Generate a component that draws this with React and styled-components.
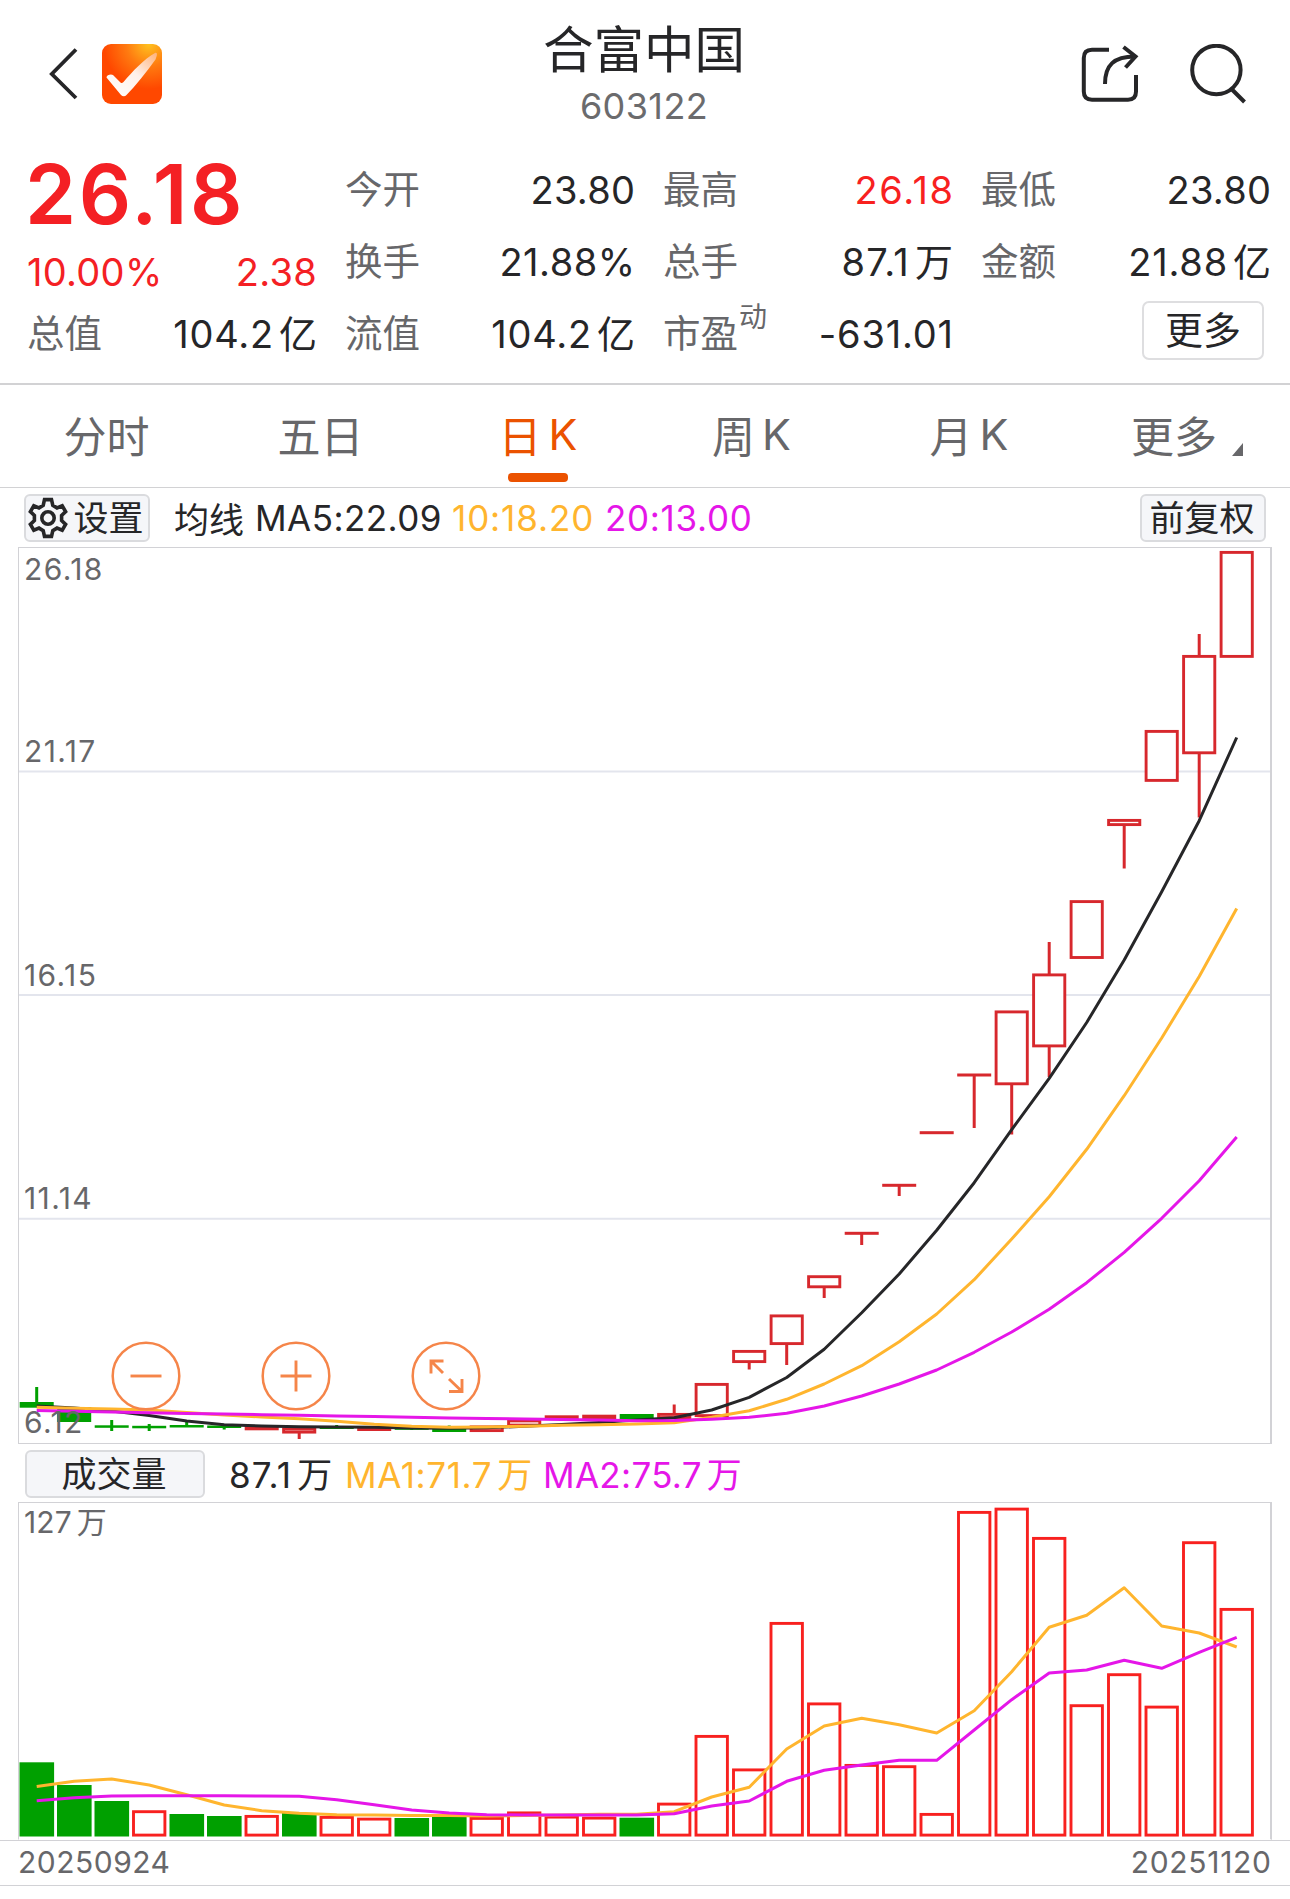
import styled, { createGlobalStyle } from "styled-components";

const GlobalStyle = createGlobalStyle`
  * {
    box-sizing: border-box;
  }
  body {
    margin: 0;
    background: #fff;
    color: #262628;
    font-family: "Inter", "Noto Sans CJK SC", sans-serif;
  }
`;

const Page = styled.div`
  width: 1290px;
  height: 1899px;
  overflow: hidden;
  background: #fff;
`;

const Header = styled.header`
  height: 148px;
  padding: 0 43px 0 48px;
  display: grid;
  grid-template-columns: 493px 206px 1fr;
`;

const HeaderLeft = styled.div`
  height: 148px;
  display: flex;
  align-items: center;
  gap: 22px;
`;

const HeaderRight = styled(HeaderLeft)`
  justify-content: flex-end;
  gap: 50px;
`;

const TitleBox = styled.div`
  display: flex;
  flex-direction: column;
  align-items: center;
  padding-top: 19px;
`;

const StockName = styled.h1`
  margin: 0;
  font-size: 50.5px;
  line-height: 62px;
  font-weight: 400;
`;

const StockCode = styled.div`
  font-size: 36px;
  line-height: 50px;
  color: #6b6b6d;
  letter-spacing: 0.4px;
`;

const Quote = styled.section`
  height: 237px;
  padding: 6px 19px 0 28px;
  display: grid;
  grid-template-columns: repeat(4, 289px);
  grid-template-rows: repeat(3, 72px);
  column-gap: 29px;
  border-bottom: 2px solid #d2d2d4;
`;

const PriceCell = styled.div`
  grid-row: span 2;
  margin-top: -1px;
  color: #f42024;
`;

const Price = styled.div`
  margin-left: -3px;
  font-size: 82px;
  line-height: 84px;
  font-weight: 600;
  letter-spacing: 2.6px;
`;

const Change = styled.div`
  display: flex;
  justify-content: space-between;
  margin-left: -1px;
  font-size: 38px;
  line-height: 70px;
  letter-spacing: 0.3px;
`;

const Cell = styled.div`
  display: flex;
  align-items: center;
  justify-content: space-between;
  font-size: 38px;
  line-height: 72px;
`;

const Label = styled.span`
  color: #67676a;
  margin-left: -1px;
  font-size: 37.5px;
`;

const Sup = styled.sup`
  display: inline-block;
  margin-left: 1px;
  font-size: 28px;
  line-height: 28px;
  vertical-align: 20px;
`;

const Value = styled.span`
  color: ${(props) => props.$color || "inherit"};
  letter-spacing: ${(props) => props.$ls || 0}px;
  margin-right: -${(props) => props.$ls || 0}px;
`;

const Unit = styled.span`
  margin-left: 5px;
`;

const MoreCell = styled(Cell)`
  justify-content: flex-end;
  padding-right: 7px;
`;

const MoreButton = styled.button`
  width: 122px;
  height: 59px;
  padding: 0;
  margin-top: -7px;
  border: 2px solid #dedee0;
  border-radius: 7px;
  background: #fff;
  color: #262628;
  font: 400 38px/55px "Inter", "Noto Sans CJK SC", sans-serif;
`;

const Tabs = styled.nav`
  height: 103px;
  display: grid;
  grid-template-columns: repeat(6, 1fr);
  border-bottom: 1px solid #d2d2d4;
`;

const Tab = styled.div`
  position: relative;
  display: flex;
  justify-content: center;
  align-items: center;
  gap: 7px;
  font-size: 43px;
  color: ${(props) => (props.$active ? "#eb5200" : "#67676a")};
  padding: 0 ${(props) => props.$right || 0}px 4px ${(props) => props.$left || 0}px;

  &::after {
    content: "";
    display: ${(props) => (props.$active ? "block" : "none")};
    position: absolute;
    bottom: 5px;
    left: 78px;
    width: 60px;
    height: 9px;
    border-radius: 4px;
    background: #eb5200;
  }
`;

const Corner = styled.i`
  width: 11px;
  height: 13px;
  margin: 31px 0 0 8px;
  background: #67676a;
  clip-path: polygon(100% 0, 100% 100%, 0 100%);
`;

const Toolbar = styled.div`
  height: ${(props) => props.$height}px;
  padding: 0 24px;
  display: flex;
  align-items: center;
  font-size: 35px;
`;

const Chip = styled.button`
  width: ${(props) => props.$width}px;
  height: 48px;
  padding: 0 2px 0 0;
  display: flex;
  align-items: center;
  justify-content: center;
  gap: 5px;
  border: 2px solid #dadbde;
  border-radius: 6px;
  background: #f5f6f9;
  color: #262628;
  font: 400 35px/44px "Inter", "Noto Sans CJK SC", sans-serif;
  margin-left: ${(props) => props.$left || 0};
`;

const Legend = styled.span`
  color: ${(props) => props.$color || "#262628"};
  margin-left: ${(props) => props.$left || 0}px;
  width: ${(props) => props.$width}px;
  white-space: nowrap;
  letter-spacing: ${(props) => props.$ls || 0}px;
`;

const VolumeBar = styled(Toolbar)`
  padding-left: 25px;

  ${Chip} {
    margin-top: 2px;
  }
  ${Legend} {
    margin-top: -2px;
  }
`;

const Plot = styled.div`
  position: relative;
  height: ${(props) => props.$height}px;
  margin: 0 18px;
  border: 1px solid #d2d2d6;
  border-right-width: 2px;
  border-bottom-color: ${(props) => (props.$open ? "transparent" : "#d2d2d6")};

  svg.plot {
    display: block;
    position: absolute;
    left: -19px;
    top: -1px;
  }
`;

const AxisLabel = styled.span`
  position: absolute;
  left: 5px;
  top: ${(props) => props.$top}px;
  font-size: 30px;
  line-height: 36px;
  color: #67676a;
  letter-spacing: ${(props) => props.$ls ?? 1.4}px;
`;

const RoundButton = styled.button`
  position: absolute;
  left: ${(props) => props.$left}px;
  top: 792.5px;
  width: 70px;
  height: 70px;
  padding: 0;
  border: 0;
  background: none;
`;

const Dates = styled.footer`
  height: 46px;
  padding: 0 19px 3px 18px;
  display: flex;
  align-items: center;
  justify-content: space-between;
  border-top: 1px solid #d2d2d6;
  border-bottom: 1px solid #d2d2d6;
  font-size: 30px;
  color: #67676a;
`;

const DateText = styled.span`
  letter-spacing: ${(props) => props.$ls}px;
  margin-right: -${(props) => props.$ls}px;
`;

const YELLOW = "#ffb52e";
const MAGENTA = "#e516e8";
const RED = "#d7282d";
const GREEN = "#00a000";
const VOLUME_RED = "#f8211f";

const PLOT_TOP = 547;
const VOLUME_TOP = 1502;
const STEP = 37.5;
const centerX = (i) => 36.7 + STEP * i;

// [body top, body bottom, wick top, wick bottom, direction]
const candles = [
  [1402, 1407.7, 1387, 1407, "down"],
  [1407.3, 1422, 1407, 1422, "down"],
  [1425.3, 1427.8, 1420, 1431, "down"],
  [1425.8, 1428.3, 1424, 1431, "down"],
  [1425, 1427.5, 1420, 1427, "down"],
  [1425.5, 1428, 1425, 1429.5, "down"],
  [1425, 1430.3, 1426, 1430, "up"],
  [1427.5, 1433.5, 1428, 1439, "up"],
  [1427, 1429, 1425, 1429, "down"],
  [1426, 1431, 1427, 1431, "up"],
  [1427.5, 1429.8, 1427, 1430, "down"],
  [1427, 1432, 1425.5, 1431, "down"],
  [1425.5, 1432, 1427, 1431, "up"],
  [1419.5, 1426.5, 1420, 1426, "up"],
  [1415.3, 1420, 1416, 1421, "up"],
  [1414.7, 1419, 1415, 1419, "up"],
  [1414, 1419, 1414, 1419, "down"],
  [1413, 1419, 1404.5, 1419, "up"],
  [1383, 1417, 1384, 1416, "up"],
  [1350, 1363, 1351, 1369.5, "up"],
  [1314.5, 1345, 1316, 1365, "up"],
  [1275.3, 1288.2, 1276, 1298, "up"],
  [1231.8, 1234.8, 1233, 1245, "up"],
  [1183.8, 1186.8, 1185, 1196, "up"],
  [1131.2, 1134.2, 1132, 1133, "up"],
  [1073.5, 1076.5, 1074, 1128, "up"],
  [1010.5, 1085.2, 1012, 1134.5, "up"],
  [973.5, 1047.3, 942, 1077, "up"],
  [900.2, 958.9, 902, 957, "up"],
  [819, 826, 820, 868.5, "up"],
  [730, 781.8, 732, 780, "up"],
  [655, 754.2, 634, 817.5, "up"],
  [551, 657.8, 553, 656, "up"],
];

const ma5 = [
  1406, 1408, 1411, 1415.5, 1421, 1424.7, 1426, 1426.7, 1427, 1427.2, 1428,
  1428.3, 1427.8, 1426.3, 1424.5, 1422.5, 1420, 1417.7, 1410, 1397.3, 1377.5,
  1349.3, 1312.7, 1274, 1230.3, 1182.7, 1129.7, 1078.3, 1022.5, 960, 891.7,
  820.7, 737.5,
];

const ma10 = [
  1407.3, 1408.3, 1409, 1410, 1412.5, 1415, 1417, 1418.8, 1421.3, 1424.3,
  1426.3, 1427.3, 1427, 1426.2, 1425.3, 1424.7, 1424, 1422.7, 1417.3, 1410.7,
  1399.3, 1384, 1365.7, 1341.7, 1314, 1279.7, 1239, 1196.7, 1149.3, 1095.7,
  1038, 976.5, 908.5,
];

const ma20 = [
  1410.5, 1411.3, 1412, 1412.7, 1413.4, 1414, 1414.7, 1415.3, 1416, 1416.5,
  1417.2, 1418, 1418.6, 1419, 1419.4, 1420, 1420.7, 1420.5, 1419.3, 1417.3,
  1413.3, 1406, 1396, 1384, 1370, 1352.3, 1332, 1309.3, 1282.7, 1252.3, 1218.3,
  1180.7, 1137,
];

const volumes = [
  1762.3, 1785, 1801, 1810.3, 1814, 1816, 1815, 1813, 1816, 1817.7, 1818,
  1816.7, 1817, 1811.5, 1815.7, 1816.7, 1817.7, 1802.7, 1735, 1768.5, 1622,
  1702.5, 1764, 1765.3, 1813, 1511, 1507.7, 1537, 1704.3, 1673.3, 1705.7,
  1541.3, 1608,
];
const greenVolumes = [0, 1, 2, 4, 5, 7, 10, 11, 16];

const volumeMa1 = [
  1786.5, 1781.3, 1779, 1785, 1794.7, 1805, 1810.7, 1813.3, 1814.7, 1815,
  1815.5, 1815.5, 1816, 1815.5, 1815, 1814.3, 1814.3, 1811.7, 1797, 1787.3,
  1749, 1726, 1718.3, 1724.7, 1733, 1710.7, 1671.7, 1627.3, 1615.3, 1587.7,
  1626, 1633, 1647,
];

const volumeMa2 = [
  1800.7, 1797.7, 1796, 1795.7, 1795.7, 1795.8, 1796, 1796.3, 1799.7, 1804.7,
  1810, 1813, 1814.7, 1815, 1815, 1815, 1815, 1813.7, 1806, 1801, 1781.3,
  1770.3, 1765, 1760.3, 1760.3, 1730, 1699.7, 1673, 1670, 1660.3, 1668.3,
  1652.3, 1637.3,
];

const Line = ({ data, color }) => (
  <polyline
    points={data.map((y, i) => `${centerX(i)},${y}`).join(" ")}
    fill="none"
    stroke={color}
    strokeWidth="3"
    strokeLinejoin="round"
  />
);

const Candle = ({ index, data }) => {
  const [top, bottom, high, low, dir] = data;
  const x = centerX(index);
  const solid = dir === "down" || bottom - top < 6;
  const color = dir === "down" ? GREEN : RED;
  return (
    <g>
      <path
        d={`M${x} ${high}V${top + 1}M${x} ${bottom - 1}V${Math.max(low, bottom - 1)}`}
        stroke={color}
        strokeWidth="3"
      />
      {solid ? (
        <rect x={x - 17} y={top} width="34" height={bottom - top} fill={color} />
      ) : (
        <rect
          x={x - 15.6}
          y={top + 1.4}
          width="31.2"
          height={bottom - top - 2.8}
          fill="#fff"
          stroke={color}
          strokeWidth="2.9"
        />
      )}
    </g>
  );
};

const Volume = ({ index, top }) => {
  const x = centerX(index);
  if (greenVolumes.includes(index)) {
    return <rect x={x - 17.2} y={top} width="34.6" height={1836.5 - top} fill={GREEN} />;
  }
  return (
    <rect
      x={x - 15.7}
      y={top + 1.4}
      width="31.4"
      height={1835.1 - top - 1.4}
      fill="none"
      stroke={VOLUME_RED}
      strokeWidth="2.9"
    />
  );
};

const BackIcon = () => (
  <svg width="32" height="52" viewBox="48 48 32 52" fill="none">
    <path d="M76 49.5L51.8 74L76 98" stroke="#262628" strokeWidth="3.8" />
  </svg>
);

const Logo = () => (
  <svg width="60" height="60" viewBox="0 0 60 60">
    <defs>
      <radialGradient id="logoBg" cx="0.78" cy="0" r="0.75">
        <stop offset="0" stopColor="#ffc21f" />
        <stop offset="0.5" stopColor="#ff7a10" />
        <stop offset="1" stopColor="#ff4800" />
      </radialGradient>
      <linearGradient id="logoTick" x1="0" y1="1" x2="1" y2="0">
        <stop offset="0" stopColor="#fff" />
        <stop offset="0.55" stopColor="#fff1ea" />
        <stop offset="1" stopColor="#ffb27a" />
      </linearGradient>
    </defs>
    <rect width="60" height="60" rx="9" fill="url(#logoBg)" />
    <path
      d="M4.5 33.5C4.5 31 9 29.5 11 31L18.5 38.5C19.5 39.5 20.5 39 21.5 38C31 27 42 15 53 9C56 8 55 12 53.5 15.5C44 29 34 41 24.5 51C23 52.7 20.5 52.5 19 51Z"
      fill="url(#logoTick)"
    />
  </svg>
);

const ShareIcon = () => (
  <svg width="58" height="60" viewBox="1081 44 58 60" fill="none" stroke="#262628" strokeWidth="4">
    <path d="M1109 49.8H1092Q1083.8 49.8 1083.8 58V91.5Q1083.8 99.7 1092 99.7H1128Q1136 99.7 1136 91.5V75" />
    <path d="M1105 84C1105 65 1114 56.5 1135 56.5" />
    <path d="M1123.5 47L1135.5 56.5L1125.5 67.5" />
  </svg>
);

const SearchIcon = () => (
  <svg width="58" height="60" viewBox="1189 43 58 60" fill="none" stroke="#262628" strokeWidth="4">
    <circle cx="1216.4" cy="69" r="24.2" />
    <path d="M1231.5 88L1244.5 101" />
  </svg>
);

const GearIcon = () => (
  <svg width="40" height="42" viewBox="0 0 40 42" fill="none" stroke="#262628" strokeWidth="3.6">
    <path d="M16.5 2.6H23.5L24.8 8.4L29 10.9L34.2 8.8L37.6 14.6L33.6 18.4V23.6L37.6 27.4L34.2 33.2L29 31.1L24.8 33.6L23.5 39.4H16.5L15.2 33.6L11 31.1L5.8 33.2L2.4 27.4L6.4 23.6V18.4L2.4 14.6L5.8 8.8L11 10.9L15.2 8.4Z" />
    <circle cx="20" cy="21" r="6.2" />
  </svg>
);

const RoundIcon = ({ d }) => (
  <svg width="70" height="70" viewBox="-35 -35 70 70" fill="none" stroke="#f58549">
    <circle r="33.3" strokeWidth="2.5" />
    <path d={d} strokeWidth="2.9" />
  </svg>
);

const Quotation = ({ label, sup, value, unit, color, ls }) => (
  <Cell>
    <Label>
      {label}
      {sup && <Sup>{sup}</Sup>}
    </Label>
    <Value $color={color} $ls={ls}>
      {value}
      {unit && <Unit>{unit}</Unit>}
    </Value>
  </Cell>
);

const App = () => {
  return (
    <Page>
      <GlobalStyle />
      <Header>
        <HeaderLeft>
          <BackIcon />
          <Logo />
        </HeaderLeft>
        <TitleBox>
          <StockName>合富中国</StockName>
          <StockCode>603122</StockCode>
        </TitleBox>
        <HeaderRight>
          <ShareIcon />
          <SearchIcon />
        </HeaderRight>
      </Header>

      <Quote>
        <PriceCell>
          <Price>26.18</Price>
          <Change>
            <span>10.00%</span>
            <span>2.38</span>
          </Change>
        </PriceCell>
        <Quotation label="今开" value="23.80" ls={0.3} />
        <Quotation label="最高" value="26.18" color="#f8211f" ls={1.6} />
        <Quotation label="最低" value="23.80" ls={0.3} />
        <Quotation label="换手" value="21.88%" ls={0.5} />
        <Quotation label="总手" value="87.1" unit="万" ls={1.3} />
        <Quotation label="金额" value="21.88" unit="亿" ls={0.8} />
        <Quotation label="总值" value="104.2" unit="亿" ls={0.8} />
        <Quotation label="流值" value="104.2" unit="亿" ls={0.8} />
        <Quotation label="市盈" sup="动" value="-631.01" ls={0.8} />
        <MoreCell>
          <MoreButton>更多</MoreButton>
        </MoreCell>
      </Quote>

      <Tabs>
        <Tab $right={2}>分时</Tab>
        <Tab $right={4}>五日</Tab>
        <Tab $active $left={1}>
          <span>日</span>
          <span>K</span>
        </Tab>
        <Tab $right={2}>
          <span>周</span>
          <span>K</span>
        </Tab>
        <Tab $left={3}>
          <span>月</span>
          <span>K</span>
        </Tab>
        <Tab $left={9}>
          更多
          <Corner />
        </Tab>
      </Tabs>

      <Toolbar $height={59}>
        <Chip $width={126}>
          <GearIcon />
          设置
        </Chip>
        <Legend $left={24} $width={81}>均线</Legend>
        <Legend $width={197} $ls={0.45}>MA5:22.09</Legend>
        <Legend $width={153} $ls={0.9} $color={YELLOW}>10:18.20</Legend>
        <Legend $width={160} $ls={0.7} $color={MAGENTA}>20:13.00</Legend>
        <Chip $width={126} $left="auto">前复权</Chip>
      </Toolbar>

      <Plot $height={897}>
        <svg className="plot" width="1290" height="897" viewBox={`0 ${PLOT_TOP} 1290 897`}>
          <path d="M19 771.5H1270M19 995H1270M19 1218.7H1270" stroke="#e3e5ed" strokeWidth="2" />
          {candles.map((candle, i) => (
            <Candle key={i} index={i} data={candle} />
          ))}
          <Line data={ma5} color="#262628" />
          <Line data={ma10} color={YELLOW} />
          <Line data={ma20} color={MAGENTA} />
        </svg>
        <AxisLabel $top={3}>26.18</AxisLabel>
        <AxisLabel $top={185}>21.17</AxisLabel>
        <AxisLabel $top={409}>16.15</AxisLabel>
        <AxisLabel $top={632}>11.14</AxisLabel>
        <AxisLabel $top={855.5}>6.12</AxisLabel>
        <RoundButton $left={91.6}>
          <RoundIcon d="M-15.5 0H15.5" />
        </RoundButton>
        <RoundButton $left={241.6}>
          <RoundIcon d="M-15.5 0H15.5M0 -15.5V15.5" />
        </RoundButton>
        <RoundButton $left={391.6}>
          <RoundIcon d="M-2.5 -15H-15V-2.5M-15 -15L-3 -3M3 15.5H16V3M16 15.5L3 3" />
        </RoundButton>
      </Plot>

      <VolumeBar $height={58}>
        <Chip $width={180}>成交量</Chip>
        <Legend $left={24} $width={116} $ls={1.2}>
          87.1<Unit>万</Unit>
        </Legend>
        <Legend $width={198} $ls={0.6} $color={YELLOW}>
          MA1:71.7<Unit>万</Unit>
        </Legend>
        <Legend $width={200} $ls={0.3} $color={MAGENTA}>
          MA2:75.7<Unit>万</Unit>
        </Legend>
      </VolumeBar>

      <Plot $height={338} $open>
        <svg className="plot" width="1290" height="338" viewBox={`0 ${VOLUME_TOP} 1290 338`}>
          {volumes.map((top, i) => (
            <Volume key={i} index={i} top={top} />
          ))}
          <Line data={volumeMa1} color={YELLOW} />
          <Line data={volumeMa2} color={MAGENTA} />
        </svg>
        <AxisLabel $top={1} $ls={0.1}>
          127<Unit>万</Unit>
        </AxisLabel>
      </Plot>
      <Dates>
        <DateText $ls={0.5}>20250924</DateText>
        <DateText $ls={0.7}>20251120</DateText>
      </Dates>
    </Page>
  );
};

export default App;
